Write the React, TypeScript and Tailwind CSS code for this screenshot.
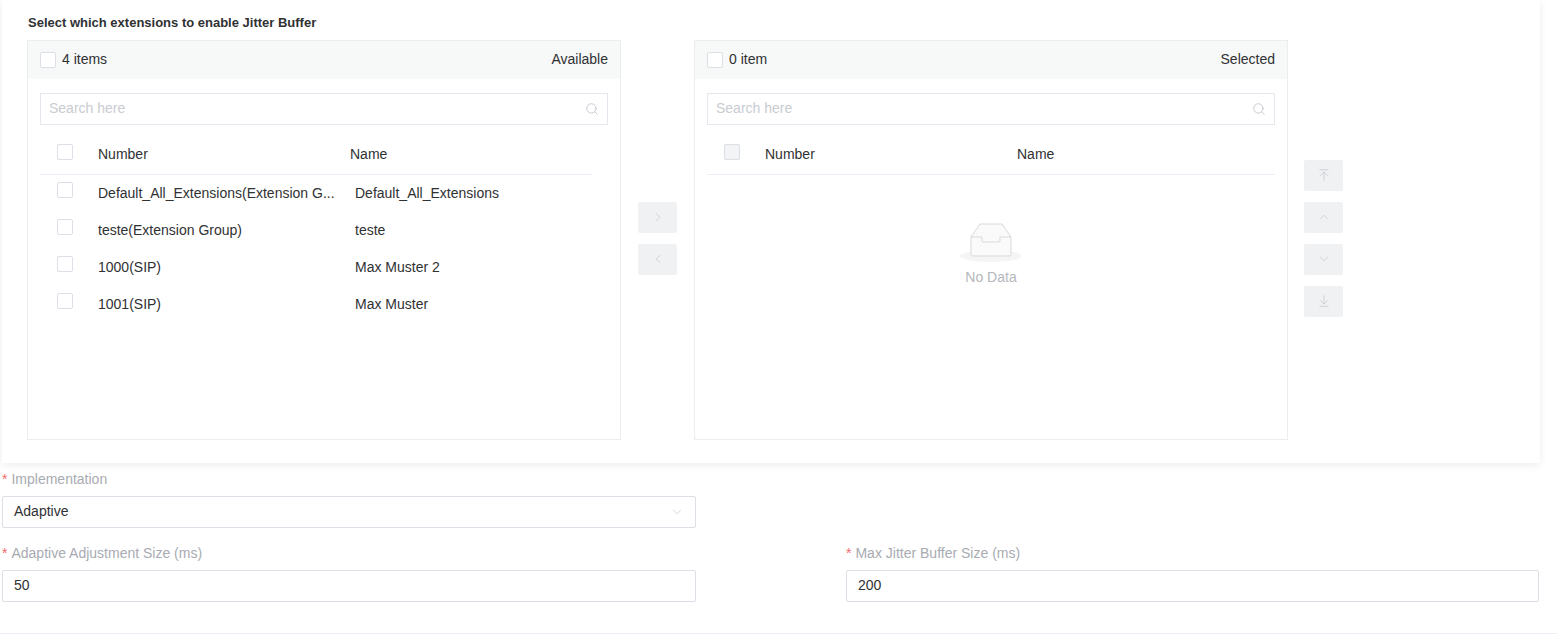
import { Search, ChevronRight, ChevronLeft, ChevronUp, ChevronDown, ArrowUpToLine, ArrowDownToLine } from 'lucide-react';

const ROWS = [
  { number: 'Default_All_Extensions(Extension Group)', name: 'Default_All_Extensions' },
  { number: 'teste(Extension Group)', name: 'teste' },
  { number: '1000(SIP)', name: 'Max Muster 2' },
  { number: '1001(SIP)', name: 'Max Muster' },
];

function Box({ disabled }: { disabled?: boolean }) {
  return (
    <span
      className={`inline-block h-[16px] w-[16px] shrink-0 rounded-[2px] border border-[#dcdfe6] ${
        disabled ? 'bg-[#f2f3f5]' : 'bg-white'
      }`}
    />
  );
}

function Panel({ count, title, empty }: { count: string; title: string; empty?: boolean }) {
  return (
    <div className="flex h-[400px] w-[594px] flex-col border border-[#ebeef0]">
      <div className="flex h-[38px] items-center justify-between bg-[#f7f8f8] pl-[12px] pr-[12px] text-[14px] text-[#303133]">
        <div className="flex items-center gap-[6px]">
          <Box />
          <span>{count}</span>
        </div>
        <span>{title}</span>
      </div>
      <div className="px-[12px] pt-[14px]">
        <div className="flex h-[32px] items-center justify-between border border-[#e4e7ed] px-[8px]">
          <span className="text-[14px] text-[#c9ccd2]">Search here</span>
          <Search className="h-[14px] w-[14px] text-[#c0c4cc]" strokeWidth={1.5} />
        </div>
      </div>
      <div className={`ml-[12px] mt-[11px] flex h-[39px] items-center border-b border-[#ebeef5] text-[14px] text-[#303133] ${empty ? 'mr-[12px]' : 'mr-[28px]'}`}>
        <span className="ml-[17px]">
          <Box disabled={empty} />
        </span>
        <span className="ml-[25px] w-[252px]">Number</span>
        <span>Name</span>
      </div>
      {empty ? (
        <div className="flex flex-col items-center pt-[46px]">
          <svg width="64" height="42" viewBox="0 0 64 42">
            <ellipse cx="32" cy="35" rx="31" ry="6" fill="#f5f5f5" />
            <path d="M12 16 L21 3 H43 L52 16 V33 a2 2 0 0 1 -2 2 H14 a2 2 0 0 1 -2 -2 Z" fill="#fafafa" stroke="#d9d9d9" />
            <path d="M12 16 H23 V20 a1 1 0 0 0 1 1 H40 a1 1 0 0 0 1 -1 V16 H52" fill="none" stroke="#d9d9d9" />
          </svg>
          <span className="mt-[4px] text-[14px] text-[#b4b7bd]">No Data</span>
        </div>
      ) : (
        <div className="mx-[12px] text-[14px] text-[#303133]">
          {ROWS.map((r) => (
            <div key={r.number} className="flex h-[37px] items-center">
              <span className="ml-[17px]">
                <Box />
              </span>
              <span className="ml-[25px] w-[257px] truncate pr-[6px]">
                {r.number.startsWith('Default') ? 'Default_All_Extensions(Extension G...' : r.number}
              </span>
              <span>{r.name}</span>
            </div>
          ))}
        </div>
      )}
    </div>
  );
}

function Btn({ children }: { children: React.ReactNode }) {
  return (
    <div className="flex h-[31px] w-[39px] items-center justify-center rounded-[2px] bg-[#f0f1f2] text-[#c0c4cc]">
      {children}
    </div>
  );
}

function Field({ label, value, select }: { label: string; value: string; select?: boolean }) {
  return (
    <div className="flex flex-col">
      <div className="flex h-[24px] items-center text-[14px] text-[#a8abb2]">
        <span className="mr-[4px] text-[#f56c6c]">*</span>
        {label}
      </div>
      <div className="mt-[4px] flex h-[32px] items-center justify-between rounded-[2px] border border-[#dcdfe6] px-[11px] text-[14px] text-[#303133]">
        <span>{value}</span>
        {select && <ChevronDown className="h-[14px] w-[14px] text-[#c0c4cc]" strokeWidth={1.2} />}
      </div>
    </div>
  );
}

export default function App() {
  return (
    <div className="h-[639px] w-[1557px] overflow-hidden bg-white font-[family-name:Liberation_Sans,Arial,sans-serif]">
      <div className="ml-[2px] w-[1538px] bg-white pb-[23px] shadow-[0_2px_8px_rgba(0,0,0,0.08)]">
        <div className="pl-[26px] pt-[13px] text-[13px] font-bold text-[#303133]">
          Select which extensions to enable Jitter Buffer
        </div>
        <div className="mt-[7px] flex pl-[25px]">
          <Panel count="4 items" title="Available" />
          <div className="mx-[17px] flex flex-col gap-[11px] pt-[162px]">
            <Btn>
              <ChevronRight className="h-[14px] w-[14px]" strokeWidth={1.2} />
            </Btn>
            <Btn>
              <ChevronLeft className="h-[14px] w-[14px]" strokeWidth={1.2} />
            </Btn>
          </div>
          <Panel count="0 item" title="Selected" empty />
          <div className="ml-[16px] flex flex-col gap-[11px] pt-[120px]">
            <Btn>
              <ArrowUpToLine className="h-[14px] w-[14px]" strokeWidth={1.2} />
            </Btn>
            <Btn>
              <ChevronUp className="h-[14px] w-[14px]" strokeWidth={1.2} />
            </Btn>
            <Btn>
              <ChevronDown className="h-[14px] w-[14px]" strokeWidth={1.2} />
            </Btn>
            <Btn>
              <ArrowDownToLine className="h-[14px] w-[14px]" strokeWidth={1.2} />
            </Btn>
          </div>
        </div>
      </div>
      <div className="ml-[2px] mt-[5px] w-[1537px]">
        <div className="w-[694px]">
          <Field label="Implementation" value="Adaptive" select />
        </div>
        <div className="mt-[14px] grid grid-cols-[694px_693px] gap-[150px]">
          <Field label="Adaptive Adjustment Size (ms)" value="50" />
          <Field label="Max Jitter Buffer Size (ms)" value="200" />
        </div>
      </div>
      <div className="mt-[31px] h-px w-full bg-[#ebeef5]" />
    </div>
  );
}
